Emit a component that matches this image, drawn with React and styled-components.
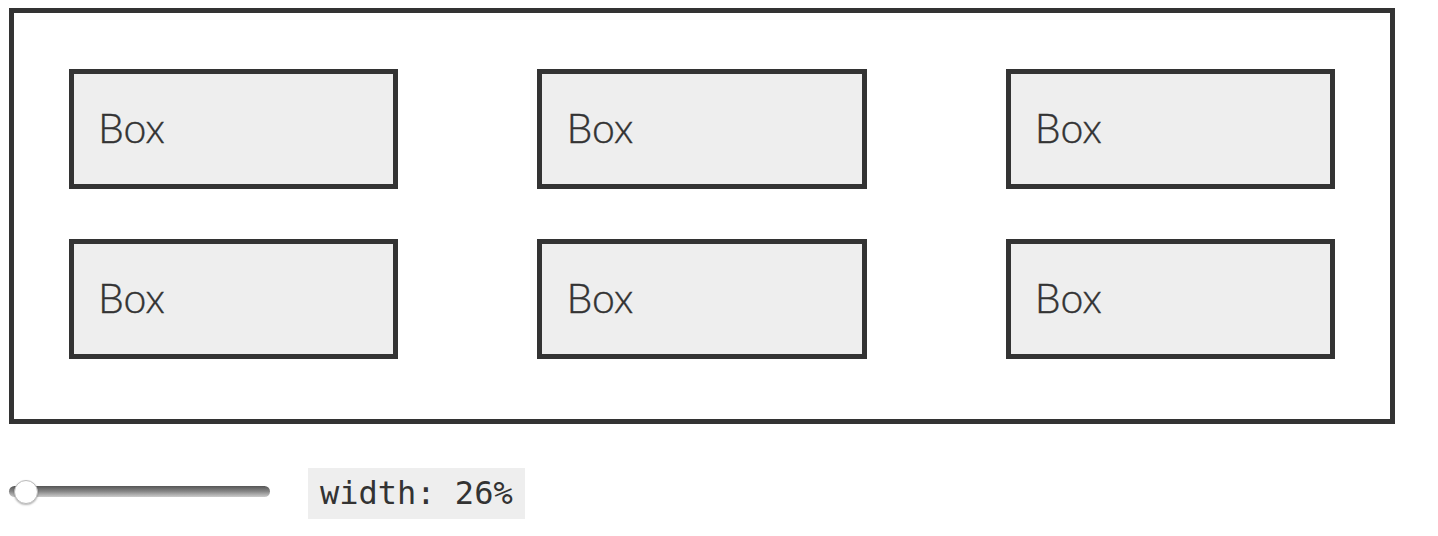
import styled, { createGlobalStyle } from "styled-components";
import { useState } from "react";

const GlobalStyle = createGlobalStyle`
   body{
      margin: 0;
      background: #fff;
      color: #333;
      font-family: Lato, "Open Sans", sans-serif;
   }
`

const Page = styled.div`
   padding: 8px 0 0 9px;
`

const Container = styled.div`
   width: 1386px;
   box-sizing: border-box;
   border: 5px solid #333;
   padding: 56px 55px 60px;
   display: flex;
   flex-wrap: wrap;
   justify-content: space-between;
   row-gap: 50px;
`

const Box = styled.div`
   box-sizing: border-box;
   width: ${props => props.$width}%;
   height: 120px;
   border: 5px solid #333;
   background: #eee;
   display: flex;
   align-items: center;
   padding: 0 0 4px 24px;
   font-size: 41px;
   font-weight: 300;
   -webkit-text-stroke: 0.4px #333;
   color: #333;
`

const Controls = styled.div`
   display: flex;
   align-items: center;
   gap: 38px;
   padding: 44px 0 0 0;
`

const Slider = styled.input`
   -webkit-appearance: none;
   appearance: none;
   width: 261px;
   height: 24px;
   margin: 0 0 5px;
   background: transparent;
   &::-webkit-slider-runnable-track{
      height: 11px;
      border-radius: 6px;
      background: linear-gradient(to bottom, #555 0%, #888 50%, #ccc 100%);
   }
   &::-webkit-slider-thumb{
      -webkit-appearance: none;
      width: 24px;
      height: 24px;
      margin-top: -6px;
      border-radius: 50%;
      background: #fff;
      border: 1px solid #bbb;
      box-shadow: 0 1px 2px rgba(0,0,0,0.3);
      box-sizing: border-box;
   }
`

const Code = styled.code`
   background: #eee;
   font-family: "DejaVu Sans Mono", "Liberation Mono", monospace;
   font-size: 32px;
   line-height: 51px;
   padding: 0 12px;
   color: #333;
`

export default function App() {
   const [width, setWidth] = useState(26);

   return (
      <Page>
         <GlobalStyle />
         <Container>
            {[0, 1, 2, 3, 4, 5].map(i => <Box key={i} $width={width}>Box</Box>)}
         </Container>
         <Controls>
            <Slider type='range' min={25} max={75} value={width} onChange={e => setWidth(Number(e.target.value))} />
            <Code>width: {width}%</Code>
         </Controls>
      </Page>
   );
}
